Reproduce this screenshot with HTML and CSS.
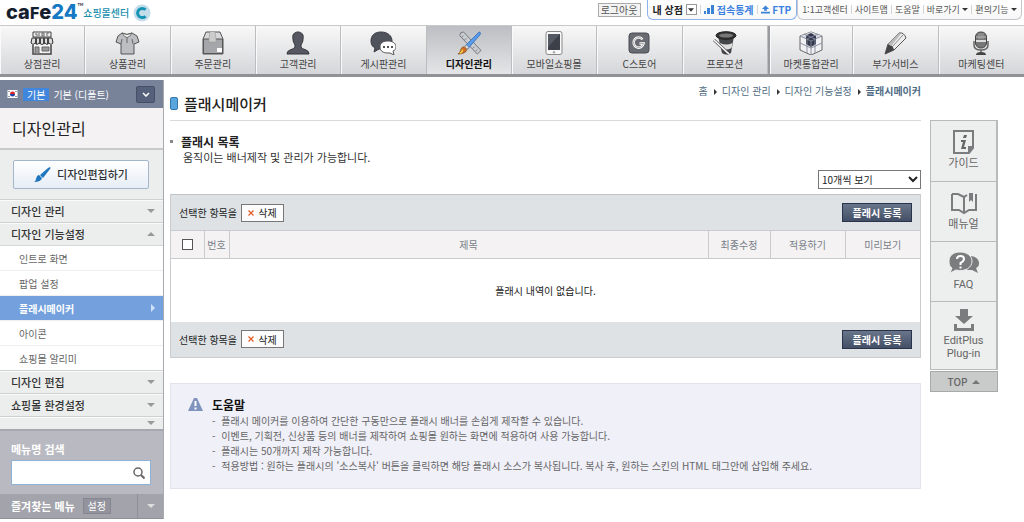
FILE: index.html
```
<!DOCTYPE html>
<html lang="ko">
<head>
<meta charset="utf-8">
<title>플래시메이커 - cafe24 쇼핑몰센터</title>
<link rel="stylesheet" href="styles.css">
</head>
<body>
<header class="top">
  <a class="logo" href="#">
    <span class="logo-name">ca<span class="logo-f">F</span>e<span class="logo-num">24</span></span><sup class="logo-tm">™</sup>
    <span class="logo-sub">쇼핑몰센터</span>
    <svg class="logo-mark" viewBox="0 0 18 18"><circle cx="9" cy="9" r="8.5" fill="#c3dcea"/><path d="M12.5 5.8A4.6 4.6 0 1 0 12.5 12.2" fill="none" stroke="#1593b5" stroke-width="3"/></svg>
  </a>
  <div class="util">
    <button class="logout" type="button">로그아웃</button>
    <div class="shop-box">
      <strong>내 상점</strong>
      <button class="shop-drop" type="button" aria-label="상점 선택"><svg viewBox="0 0 7 4" width="6" height="4"><path d="M0 0h7L3.500 4z" fill="#333"/></svg></button>
      <i class="bar"></i>
      <a href="#"><svg viewBox="0 0 10 9" width="10" height="9"><path d="M0 6h2v3H0zM3 3h3v6H3zM7 0h3v9H7z" fill="#3b82d8"/></svg> 접속통계</a>
      <i class="bar"></i>
      <a href="#"><svg viewBox="0 0 10 9" width="9" height="9"><path d="M5 0l4 4H6.500v2h-3V4H1zM0 7h10v2H0z" fill="#3b82d8"/></svg> FTP</a>
    </div>
    <div class="links-box">
      <a href="#">1:1고객센터</a><i class="bar"></i><a href="#">사이트맵</a><i class="bar"></i><a href="#">도움말</a><i class="bar"></i><a href="#">바로가기 <b class="tri"></b></a><i class="bar"></i><a href="#">편의기능 <b class="tri"></b></a>
    </div>
  </div>
</header>

<nav class="gnb">
  <a href="#"><svg viewBox="0 0 24 24"><path d="M3 1h18v5H3z" fill="#eee" stroke="#444"/><path d="M5 3h2v2M9 2v3M12 2v3h2V2zM17 5V2h2" fill="none" stroke="#666"/><path d="M2 7h20l1 5q-2 3-4 0-2 3-4 0-3 3-6 0-2 3-4 0-2 3-4 0z" fill="#ddd" stroke="#333"/><path d="M6 7v6M10 7v6M14 7v6M18 7v6" stroke="#444" stroke-width="2"/><path d="M3 14v9h18v-9" fill="#f4f4f4" stroke="#444" stroke-width="1.500"/><path d="M5 16h4v7H5zM12 16h7v4h-7z" fill="#999" stroke="#666"/></svg>상점관리</a>
  <a href="#"><svg viewBox="0 0 24 24"><path d="M7 2Q12 5 17 2l5 3 2 6-5 2v10H6V13l-5-2 2-6z" fill="#bcbec2" stroke="#555"/><path d="M7 2q5 9 10 0-5 3-10 0M12 7v5M6 13l1-5M18 13l-1-5" fill="#f5f5f5" stroke="#666"/></svg>상품관리</a>
  <a href="#"><svg viewBox="0 0 24 24"><path d="M5 1h14l3 7v15H2V8z" fill="#d8d8da" stroke="#555"/><path d="M2.500 8h19v14.500h-19z" fill="#a5a6aa" stroke="#555"/><path d="M9 1L8 8v3h7V8l-1-7" fill="#ccc" stroke="#999" stroke-width=".6"/><path d="M16 17h5v4h-5z" fill="#fff"/></svg>주문관리</a>
  <a href="#"><svg viewBox="0 0 24 24"><path d="M12 1c-4 0-6 3-5 7 0 3 1 4 2 6v2q-1 2-5 3-3 1-3 4h22q0-3-3-4-4-1-5-3v-2c1-2 2-3 2-6 1-4-1-7-5-7z" fill="#555861" stroke="#33353c"/></svg>고객관리</a>
  <a href="#"><svg viewBox="0 0 26 24"><path d="M11 1C4 1 1 5 1 10c0 4 2 6 4 7l-1 4 5-3C17 19 22 15 22 10S18 1 11 1z" fill="#50535c" stroke="#393b42"/><path d="M18 10c-5 0-8 2-8 6s3 6 8 6h2l4 2-1-4c2-1 3-2 3-4 0-4-4-6-8-6z" fill="#fff" stroke="#555"/><path d="M13 15h2v2h-2zM17 15h2v2h-2zM21 15h2v2h-2z" fill="#555"/></svg>게시판관리</a>
  <a href="#" class="on" aria-current="page"><svg viewBox="0 0 28 26"><path d="M5 2l3-1 19 20-4 4L4 5z" fill="#c9ccd1" stroke="#6d7178"/><path d="M8 5l-2 2M11 8l-2 2M20 17l-2 2M23 20l-2 2" stroke="#777"/><path d="M25 1q2 0 1 3L13 19l-3-3z" fill="#5b9cea" stroke="#3972bb"/><path d="M11 15l3 3-3 2-2-2z" fill="#ddd" stroke="#666" stroke-width=".5"/><path d="M9 17l3 3q-2 5-10 5 3-2 3-5 1-3 4-3z" fill="#cf6b27" stroke="#76501e" stroke-width=".7"/><path d="M7 20q0 3-3 4" fill="none" stroke="#f1d345" stroke-width="1.500"/></svg>디자인관리</a>
  <a href="#"><svg viewBox="0 0 24 24"><rect x="4" y=".5" width="16" height="23" rx="2" fill="#f8f8f8" stroke="#888"/><path d="M6 3h12v16H6z" fill="#3d4048"/><path d="M6 3h12L6 16z" fill="#555963"/><circle cx="12" cy="21.200" r="1.200" fill="#aaa"/></svg>모바일쇼핑몰</a>
  <a href="#"><svg viewBox="0 0 24 24"><rect x="2" y="2" width="20" height="20" rx="3" fill="#686b72" stroke="#4a4c52"/><path d="M15.500 8.500A5 5 0 1 0 16.500 12.500h-4" fill="none" stroke="#fff" stroke-width="2.500"/><path d="M15.500 8.500A5 5 0 1 0 16.500 12.500h-4" fill="none" stroke="#777" stroke-width=".6"/></svg>C스토어</a>
  <a href="#"><svg viewBox="0 0 24 24"><path d="M5 5h16l-3 17q-5 3-9 0z" fill="#45464a"/><ellipse cx="13" cy="4.500" rx="10" ry="3.800" fill="#333" stroke="#222"/><ellipse cx="13" cy="4.500" rx="7" ry="2" fill="#777"/><path d="M7 12q6 3 12.500 0l-1 5q-5 3-10.500 0z" fill="#ddd"/><path d="M1 9l15 14" stroke="#555" stroke-width="3"/><path d="M1 9l15 14" stroke="#fff" stroke-width="1.500"/></svg>프로모션</a>
  <a href="#" class="split"><svg viewBox="0 0 24 24"><path d="M12 1l11 4v14l-11 5-11-5V5z" fill="#f0f1f5" stroke="#666"/><path d="M12 1l11 4-11 5L1 5z" fill="#d5d8e0"/><path d="M8 4l4-2 5 3v8l-5 3-5-3V6z" fill="#34394f"/><path d="M1 5l11 5 11-5M12 10v14M1 12l11 5 11-5M5 3l11 5v14M19 3L8 8v14" fill="none" stroke="#858897" stroke-width=".9"/></svg>마켓통합관리</a>
  <a href="#"><svg viewBox="0 0 24 24"><path d="M2 23l3-10L16 2q5-1 7 5L11 19z" fill="#eee" stroke="#555"/><path d="M2 23l3-10q5 1 6 6z" fill="#444"/><path d="M5 13L16 2l2 1L8 15z" fill="#bbb"/><path d="M9 16L20 4" stroke="#888"/></svg>부가서비스</a>
  <a href="#"><svg viewBox="0 0 24 24"><rect x="6.500" y="1" width="11" height="16" rx="5" fill="#777" stroke="#444"/><path d="M7 6h10" stroke="#bbb" stroke-width="1"/><path d="M7 9h10v2H7z" fill="#ddd"/><path d="M10 2v6M12 2v6M14 2v6" stroke="#aaa" stroke-width=".8"/><path d="M5 10v4q0 5 7 5t7-5v-4M12 19v3" fill="none" stroke="#666" stroke-width="1.500"/><path d="M7 24q0-3 5-3t5 3z" fill="#444"/></svg>마케팅센터</a>
</nav>

<div class="page">
  <aside class="side">
    <div class="mall">
      <svg class="flag" viewBox="0 0 10 8"><path d="M0 0h10v8H0z" fill="#fff"/><path d="M2.500 4a2.500 2.500 0 0 1 5 0z" fill="#d22"/><path d="M2.500 4a2.500 2.500 0 0 0 5 0z" fill="#24a"/><path d="M1 1l1 1M9 1L8 2M1 7l1-1M9 7L8 6" stroke="#333"/></svg>
      <span class="tag">기본</span><span class="mall-name">기본 (디폴트)</span>
      <button class="mall-drop" type="button" aria-label="쇼핑몰 선택"><svg viewBox="0 0 8 5" width="8" height="5"><path d="M1 1l3 3 3-3" fill="none" stroke="#fff" stroke-width="1.500"/></svg></button>
    </div>
    <h2 class="side-title">디자인관리</h2>
    <div class="edit-wrap">
      <button class="edit" type="button"><svg viewBox="0 0 17 15" width="17" height="15"><path d="M16 0q1 1 0 2L9 11 6 8 14 1zM5 8l3 3q-1 4-8 4 2-1 2-3 1-4 3-4z" fill="#1f76bd"/></svg>디자인편집하기</button>
    </div>
    <ul class="menu">
      <li><a class="cat" href="#">디자인 관리<b class="tri"></b></a></li>
      <li><a class="cat" href="#">디자인 기능설정<b class="tri up"></b></a>
        <ul class="sub">
          <li><a href="#">인트로 화면</a></li>
          <li><a href="#">팝업 설정</a></li>
          <li><a href="#" class="on" aria-current="page">플래시메이커<b class="tri right"></b></a></li>
          <li><a href="#">아이콘</a></li>
          <li><a href="#">쇼핑몰 알리미</a></li>
        </ul>
      </li>
      <li><a class="cat" href="#">디자인 편집<b class="tri"></b></a></li>
      <li><a class="cat" href="#">쇼핑몰 환경설정<b class="tri"></b></a></li>
      <li><a class="cat short" href="#" aria-label="더보기"><b class="tri"></b></a></li>
    </ul>
    <form class="search">
      <label for="menu-q">메뉴명 검색</label>
      <div class="search-box">
        <input id="menu-q" type="text">
        <button type="button" aria-label="검색"><svg viewBox="0 0 12 12" width="12" height="12"><circle cx="5" cy="5" r="4" fill="none" stroke="#666" stroke-width="1.500"/><path d="M8 8l3.500 3.500" stroke="#666" stroke-width="2"/></svg></button>
      </div>
    </form>
    <div class="fav">
      <strong>즐겨찾는 메뉴</strong>
      <button class="fav-set" type="button">설정</button>
      <button class="fav-drop" type="button" aria-label="펼치기"><b class="tri"></b></button>
    </div>
  </aside>

  <main class="main">
    <ol class="crumb">
      <li><a href="#">홈</a></li><li><a href="#">디자인 관리</a></li><li><a href="#">디자인 기능설정</a></li><li><strong>플래시메이커</strong></li>
    </ol>
    <h1 class="title">플래시메이커</h1>
    <h3 class="section-title">플래시 목록</h3>
    <p class="desc">움직이는 배너제작 및 관리가 가능합니다.</p>
    <div class="count">
      <div class="select">
        <select aria-label="목록 개수"><option>10개씩 보기</option></select>
        <svg viewBox="0 0 10 7" width="10" height="7"><path d="M1 1l4 4 4-4" fill="none" stroke="#222" stroke-width="2"/></svg>
      </div>
    </div>
    <div class="list">
      <div class="tools">
        <span>선택한 항목을</span>
        <button class="del" type="button"><svg viewBox="0 0 6 6" width="6" height="6"><path d="M.5.5l5 5M5.500.5l-5 5" stroke="#e2602c" stroke-width="1.300"/></svg>삭제</button>
        <button class="reg" type="button">플래시 등록</button>
      </div>
      <table class="grid">
        <colgroup><col class="c-check"><col class="c-no"><col><col class="c-mod"><col class="c-app"><col class="c-app"></colgroup>
        <thead><tr><th><input type="checkbox" aria-label="전체 선택"></th><th>번호</th><th>제목</th><th>최종수정</th><th>적용하기</th><th>미리보기</th></tr></thead>
        <tbody><tr><td colspan="6">플래시 내역이 없습니다.</td></tr></tbody>
      </table>
      <div class="tools">
        <span>선택한 항목을</span>
        <button class="del" type="button"><svg viewBox="0 0 6 6" width="6" height="6"><path d="M.5.5l5 5M5.500.5l-5 5" stroke="#e2602c" stroke-width="1.300"/></svg>삭제</button>
        <button class="reg" type="button">플래시 등록</button>
      </div>
    </div>
    <section class="help">
      <svg class="warn" viewBox="0 0 15 13"><path d="M6 0h3l6 13H0z" fill="#7f93bd"/><path d="M6.500 3h2v5h-2zM6.500 9.500h2v2h-2z" fill="#fff"/></svg>
      <div>
        <h4>도움말</h4>
        <ul>
          <li>플래시 메이커를 이용하여 간단한 구동만으로 플래시 배너를 손쉽게 제작할 수 있습니다.</li>
          <li>이벤트, 기획전, 신상품 등의 배너를 제작하여 쇼핑몰 원하는 화면에 적용하여 사용 가능합니다.</li>
          <li>플래시는 50개까지 제작 가능합니다.</li>
          <li>적용방법 : 원하는 플래시의 '소스복사' 버튼을 클릭하면 해당 플래시 소스가 복사됩니다. 복사 후, 원하는 스킨의 HTML 태그안에 삽입해 주세요.</li>
        </ul>
      </div>
    </section>
  </main>

  <aside class="rail">
    <nav class="rail-box">
      <a href="#"><svg viewBox="0 0 24 24" width="24" height="24"><path d="M2 1h19v17l-4 5H2z" fill="none" stroke="#7b7c7e" stroke-width="2"/><path d="M22 16h-6v8z" fill="#7b7c7e"/><path d="M12 5h3l-1 3h-3zM9 10h5l-2 7h2v2H9l2-7H9z" fill="#666"/></svg>가이드</a>
      <a href="#"><svg viewBox="0 0 28 24" width="28" height="24"><path d="M2 3h6l6 3 3-2M26 3v16h-7l-5 3-5-3H2V3M14 6v15" fill="none" stroke="#7b7c7e" stroke-width="2"/><path d="M19 2h4v9l-2-2-2 2z" fill="#7b7c7e"/></svg>매뉴얼</a>
      <a href="#"><svg viewBox="0 0 32 24" width="32" height="24"><path d="M22 5c5 0 9 3 9 7 0 3-1 4-3 5l2 5-6-3h-5z" fill="#7b7c7e"/><path d="M12 1C5 1 1 5 1 10c0 4 1 6 3 7l-2 5 6-3c9 2 16-2 16-9 0-5-5-9-12-9z" fill="#7b7c7e" stroke="#edeeee"/><path d="M9 8q0-3 3.500-3T16 8q0 2-3.500 4v2" fill="none" stroke="#fff" stroke-width="2"/><path d="M11.500 15.500h2v2h-2z" fill="#fff"/></svg>FAQ</a>
      <a href="#" class="tall"><svg viewBox="0 0 24 24" width="24" height="24"><path d="M8 1h8v7h5l-9 8-9-8h5zM2 16h3v4h14v-4h3v7H2z" fill="#7b7c7e"/></svg>EditPlus<br>Plug-in</a>
    </nav>
    <a class="to-top" href="#">TOP <b class="tri up"></b></a>
  </aside>
</div>
</body>
</html>
```
FILE: styles.css
```
* { box-sizing: border-box; }
body { margin: 0; background: #fff; color: #333; font: 10px/15px "Noto Sans CJK KR", sans-serif; }
a { color: inherit; text-decoration: none; }
ul, ol { list-style: none; margin: 0; padding: 0; }
h1, h2, h3, h4, p { margin: 0; }
button, input, select { font: inherit; color: inherit; margin: 0; padding: 0; }
button { display: flex; align-items: center; justify-content: center; }
.tri { display: inline-block; border: 4px solid transparent; border-top-color: #999; border-bottom: 0; }
.tri.up { border: 4px solid transparent; border-bottom-color: #999; border-top: 0; }
.tri.right { border: 4px solid transparent; border-left-color: #cfe2fa; border-right: 0; }

.top { display: flex; justify-content: space-between; align-items: flex-start; height: 25px; }
.logo { display: flex; align-items: center; height: 25px; padding-left: 6px; color: #14202e; }
.logo-name { font: 800 20px/25px Inter, sans-serif; }
.logo-f { font-size: 16px; line-height: 20px; }
.logo-num { color: #1579c4; }
.logo-tm { font-size: 8px; line-height: 12px; align-self: flex-start; }
.logo-sub { color: #218fae; font-weight: 500; }
.logo-mark { width: 18px; height: 18px; margin-left: 4px; }
.util { display: flex; align-items: flex-start; }
.logout { width: 43px; height: 14px; margin: 3px 6px 0 0; border: 1px solid #aaa; background: #f3f3f3; color: #555; line-height: 10px; }
.shop-box, .links-box { display: flex; align-items: center; height: 20px; border: 1px solid #c5c7cc; border-top: 0; border-radius: 0 0 6px 6px; background: linear-gradient(#fff, #f7f7f8); white-space: nowrap; }
.shop-box { gap: 3px; padding: 0 5px; border-color: #8db2ec; }
.shop-box strong { color: #222; }
.shop-box a { color: #3b82e0; font-weight: 700; }
.shop-drop { width: 11px; height: 11px; border: 1px solid #999; background: #fff; }
.links-box { gap: 3px; padding: 0 4px; margin-right: 2px; color: #555; font-size: 9px; }
.links-box .tri { border-width: 3px 3px 0; border-top-color: #333; vertical-align: 2px; }
.bar { width: 1px; height: 9px; background: #d5d5d5; }

.gnb { display: grid; grid-template-columns: repeat(12, 1fr); height: 52px; border-top: 1px solid #c8c9cb; border-bottom: 3px solid #919296; background: linear-gradient(#f8f8f8, #d5d6d9); }
.gnb a { display: flex; flex-direction: column; align-items: center; padding-top: 5px; border-right: 1px solid #bcbdc0; box-shadow: inset 1px 0 #fafafa; color: #444; line-height: 15px; }
.gnb svg { width: 26px; height: 24px; margin-bottom: 1px; }
.gnb .on { background: linear-gradient(#bcbec3, #e4e5e6); color: #111; font-weight: 700; box-shadow: none; }
.gnb .split { border-left: 2px solid #999a9e; }
.gnb a:last-child { border-right: 0; }

.page { display: flex; align-items: flex-start; padding-top: 3px; }
.side { width: 164px; flex: none; border-right: 1px solid #a9aaaf; background: #eceeee; }
.mall { display: flex; align-items: center; height: 28px; padding: 0 8px 0 7px; background: #78839a; color: #fff; }
.flag { width: 11px; height: 8px; }
.tag { margin: 0 4px 0 5px; padding: 0 4px; background: #4086dc; line-height: 13px; }
.mall-drop { width: 19px; height: 17px; margin-left: auto; border: 1px solid #455066; border-radius: 2px; background: #55617a; }
.side-title { height: 42px; padding-left: 12px; background: #f4f2f3; border-bottom: 2px solid #c8c9cb; color: #222; font-size: 16px; line-height: 40px; font-weight: 400; }
.edit-wrap { padding: 10px 14px 10px 13px; }
.edit { width: 100%; height: 29px; gap: 6px; border: 1px solid #a3b6cb; border-radius: 2px; background: linear-gradient(#fff, #e6edf6); color: #333; font-size: 11px; font-weight: 500; }
.cat { display: flex; align-items: center; justify-content: space-between; height: 23px; padding: 0 8px 0 11px; border-top: 1px solid #cfd1d1; box-shadow: inset 0 1px #fafafa; color: #333; font-size: 11px; font-weight: 500; }
.cat .tri { margin-left: auto; }
.cat.short { height: 13px; }
.sub { background: #fff; border-top: 1px solid #d5d6d6; }
.sub li { border-bottom: 1px solid #eee; }
.sub li:last-child { border-bottom: 0; }
.sub a { display: flex; align-items: center; justify-content: space-between; height: 24px; padding: 0 8px 0 19px; color: #666; }
.sub .on { background: #74a1dd; color: #fff; font-weight: 700; }
.search { padding: 10px 12px 9px 11px; border-top: 2px solid #a7a8ae; background: #b9bac1; color: #fff; }
.search label { display: block; font-size: 11px; font-weight: 700; line-height: 16px; margin-bottom: 3px; }
.search-box { display: flex; height: 25px; border: 1px solid #8eb2d6; background: #fff; }
.search-box input { flex: 1; min-width: 0; border: 0; background: none; color: #333; padding: 0 4px; }
.search-box button { width: 22px; border: 0; background: none; }
.fav { display: flex; align-items: center; height: 25px; padding-left: 11px; border-bottom: 1px solid #8f9097; background: #a2a3ab; color: #fff; font-size: 11px; }
.fav-set { width: 28px; height: 16px; margin-left: 8px; border: 1px solid #85868f; background: #92939c; font-size: 10px; line-height: 12px; }
.fav-drop { width: 26px; height: 24px; margin-left: auto; border: 0; border-left: 1px solid #8f9098; background: none; }
.fav-drop .tri { border-top-color: #ddd; }

.main { flex: 1; min-width: 0; padding: 2px 0 0 6px; }
.crumb { display: flex; justify-content: flex-end; color: #4f6b84; line-height: 17px; }
.crumb li + li::before { content: ""; display: inline-block; margin: 0 5px 0 6px; border: 3px solid transparent; border-left-color: #333; border-right: 0; }
.title { display: flex; align-items: center; height: 22px; margin-bottom: 12px; padding-bottom: 12px; border-bottom: 1px solid #d9d9d9; color: #222; font-size: 15px; font-weight: 500; line-height: 20px; }
.title::before { content: ""; width: 6px; height: 11px; margin-right: 6px; border: 1px solid #3477ad; border-radius: 2px; background: #59a6dd; }
.section-title { display: flex; align-items: center; color: #222; font-size: 12px; line-height: 17px; }
.section-title::before { content: ""; width: 3px; height: 3px; margin-right: 8px; background: #888; }
.desc { padding-left: 13px; font-size: 11px; line-height: 15px; }
.count { display: flex; justify-content: flex-end; padding: 5px 0; }
.select { position: relative; width: 103px; height: 19px; }
.select select { width: 100%; height: 19px; padding: 0 3px; appearance: none; border: 1px solid #777; border-radius: 0; background: #fff; color: #222; }
.select svg { position: absolute; right: 3px; top: 6px; pointer-events: none; }
.list { border: 1px solid #c9cdd0; border-top: 1px solid #bfc4c8; }
.tools { display: flex; align-items: center; height: 35px; padding: 0 8px; background: #dee2e5; color: #222; }
.del { width: 43px; height: 18px; gap: 4px; margin-left: 4px; border: 1px solid #777; background: #fcfcfc; font-size: 10px; }
.reg { width: 70px; height: 19px; margin-left: auto; border: 1px solid #29344a; background: linear-gradient(#69758a, #434f66); color: #fff; font-weight: 700; }
.grid { width: 100%; table-layout: fixed; border-collapse: collapse; }
.c-check { width: 33px; }
.c-no { width: 25px; }
.c-mod { width: 62px; }
.c-app { width: 75px; }
.grid th { height: 28px; padding: 0; border: 1px solid #c9cacd; border-width: 1px 0 1px 1px; background: #f4f2f3; color: #777e88; font-weight: 400; }
.grid th:first-child { border-left: 0; }
.grid th input { display: block; width: 11px; height: 11px; margin: 0 auto; appearance: none; border: 1px solid #555; background: #fff; }
.grid th input:checked { background: #555; }
.grid td { height: 63px; padding: 0; text-align: center; color: #222; }
.help { display: flex; align-items: flex-start; gap: 9px; margin-top: 25px; padding: 12px 17px 15px; border: 1px solid #e3e3ec; background: #f0f0f9; }
.warn { width: 15px; height: 13px; flex: none; margin-top: 2px; }
.help h4 { color: #111; font-size: 12px; line-height: 17px; }
.help li { color: #666; line-height: 15px; }
.help li::before { content: "- "; margin-right: 3px; }

.rail { width: 68px; flex: none; margin: 40px 26px 0 9px; color: #666; }
.rail-box { border: 1px solid #b9bbbb; border-right-width: 2px; background: #edeeee; font-family: Roboto, "Noto Sans CJK KR", sans-serif; }
.rail-box a { display: flex; flex-direction: column; align-items: center; height: 60px; padding-top: 9px; font-size: 11px; line-height: 13px; text-align: center; }
.rail-box a + a { border-top: 1px solid #b9bbbb; }
.rail-box svg { margin-bottom: 3px; }
.rail-box .tall { height: 68px; padding-top: 6px; }
.rail-box .tall svg { margin-bottom: 2px; }
.to-top { display: flex; align-items: center; justify-content: center; gap: 5px; height: 21px; margin-top: 1px; border: 1px solid #a8a9a9; background: #c9caca; font-weight: 500; }
.to-top .tri.up { border-bottom-color: #777; }
```
